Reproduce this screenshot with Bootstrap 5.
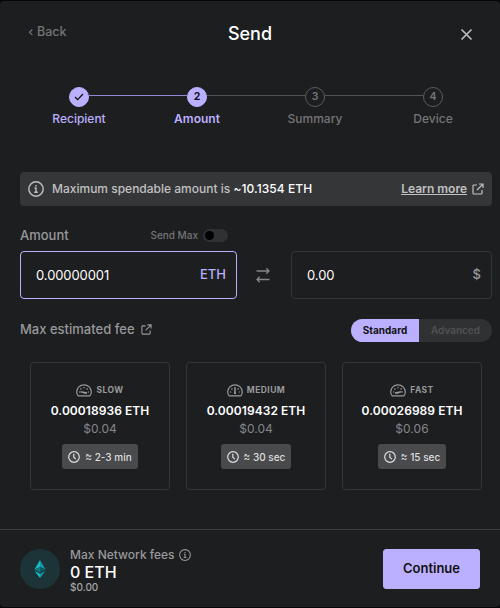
<!DOCTYPE html>
<html lang="en">
<head>
<meta charset="utf-8">
<meta name="viewport" content="width=device-width, initial-scale=1">
<title>Send</title>
<link href="https://cdn.jsdelivr.net/npm/bootstrap@5.3.0/dist/css/bootstrap.min.css" rel="stylesheet">
<style>
:root{--accent:#bbb0ff;--muted:#747577;--soft:#98999a;--line:#343537}
html{background:#060607}
body{background:#060607;font-family:Inter,sans-serif;font-size:13px;line-height:16px;color:#fff;font-weight:500;padding:1px 0;overflow:hidden}
svg{display:block;fill:none;stroke:currentColor;flex:none}
.dialog-box{background:#1d1e20;height:606px;border-radius:4px}
.top-bar{height:66px;padding:22px 27px 0 28px}
.back-link{color:var(--muted);width:100px;font-size:12.5px;padding-top:1px}
.heading{font-size:18px;line-height:22px;margin-right:1px}
.close-btn{color:#bbb;width:100px;padding-top:5px}
.stepper{padding:20px 8px 0 20px}
.step-item{width:118px;flex:none}
.step-item .track{height:20px}
.bar{height:1px;margin-bottom:3px;background:#515254}
.bar.done{background:#9288cf}
.bar.none{background:none}
.dot{width:20px;height:20px;border-radius:50%;border:1px solid #5a5b5d;color:var(--muted);font-size:10.5px;font-weight:600;flex:none}
.dot.on{background:var(--accent);border-color:var(--accent);color:#111;font-weight:700}
.step-name{font-size:12px;color:var(--muted);margin-top:4px}
.on-text{color:var(--accent)}
.content{padding:45px 8px 0 20px}
.notice{height:34px;background:#353638;border-radius:4px;padding:0 8px;font-size:12px;color:#c1c1c2}
.max-value{letter-spacing:.06px}
.more-link{margin-right:5px}
.pay{width:217px}
.pay-label{height:45px;padding:13px 9px 0 0;color:var(--soft)}
.send-max{font-size:10px;color:var(--muted);margin-right:5px}
.switch-box{width:25px;height:13px;background:#303133;border-radius:7px;padding:2px}
.switch-box i{display:block;width:9px;height:9px;background:#000;border-radius:50%}
.field{height:48px;border:1px solid var(--line);border-radius:4px;padding:0 10px 0 15px;font-weight:400}
.field.active{border-color:var(--accent)}
.field input{all:unset;min-width:0;width:120px;font-size:13px;color:#fff;letter-spacing:-.08px}
.unit{font-weight:500;padding-bottom:2px}
.dollar{color:#999a9c}
.swap{width:54px;padding:0 2px 16px 0;color:#858688}
.fiat{width:201px}
.fee-head{margin-top:20px;color:var(--soft)}
.fee-title{padding-bottom:3px}
.fee-title svg{margin:1px 0 0 6px}
.segment{height:23px;border-radius:12px;overflow:hidden;font-size:10px;font-weight:600;background:#303133}
.segment span{padding-bottom:1px}
.seg-a{background:var(--accent);color:#111;width:68px;font-weight:700}
.seg-b{width:73px;color:#505153}
.fee-row{padding:20px 10px 0;gap:16px}
.fee{width:140px;height:128px;border:1px solid var(--line);border-radius:4px;padding-top:19px}
.fee-kind{font-size:8.5px;line-height:14px;font-weight:700;letter-spacing:.45px;color:var(--soft);gap:4px}
.fee-kind svg{margin-top:2px}
.eth{font-size:12px;font-weight:600;letter-spacing:.06px;margin-top:6px}
.usd{font-size:12px;color:#858688;letter-spacing:.06px;margin:2px 0 7px;font-weight:400}
.eta{height:25px;background:#484a4c;border-radius:3px;padding:0 6px;font-size:10px;color:#dededf;gap:5px}
.foot{height:78px;border-top:1px solid #3c3d3f;padding:0 20px}
.coin{width:40px;height:40px;border-radius:50%;background:#1c3438}
.coin svg{stroke:none}
.totals{margin-left:10px;padding-top:1px}
.net-label{font-size:12px;color:var(--soft);gap:4px}
.net-value{font-size:16px;line-height:19px}
.net-usd{font-size:10px;line-height:10px;color:#a5a6a7}
.go{--bs-btn-bg:#bbb0ff;--bs-btn-color:#111;--bs-btn-hover-bg:#cbc3ff;--bs-btn-border-color:#bbb0ff;width:97px;height:40px;border-radius:3px;font-size:13px;font-weight:600;padding:0}
</style>
</head>
<body>
<svg width="0" height="0" class="position-absolute">
<symbol id="ext" viewBox="0 0 12 12"><path d="M5 2H1.8Q1 2 1 2.8v7.4q0 .8.8.8h7.4q.8 0 .8-.8V7M7 1h4v4M11 1 5 7"/></symbol>
<symbol id="info" viewBox="0 0 16 16"><circle cx="8" cy="8" r="7.2"/><path d="M6.5 7H8v4.3M6.300 11.300h3.500M8 4v1.400"/></symbol>
<symbol id="clock" viewBox="0 0 12 12"><circle cx="6" cy="6" r="5.300"/><path d="M5.800 2.700v3.500l2 2"/></symbol>
<symbol id="dash" viewBox="0 0 16 13"><path d="M2.2 11.9Q.7 10.5.7 8a7.3 7.2 0 0 1 14.6 0q0 2.5-1.5 3.9z"/><path d="M3 8h1.2M4.4 4.5l1 1M8 3v1.3M11.6 4.5l-1 1M11.8 8H13"/></symbol>
</svg>
<main class="dialog-box d-flex flex-column">
<header class="top-bar d-flex justify-content-between align-items-start">
<div class="back-link d-flex align-items-center"><svg width="5" height="8" viewBox="0 0 5 8" class="me-1" stroke-width="1.2"><path d="M4.3 1.5 1.5 4.2l2.8 2.7"/></svg><span>Back</span></div>
<div class="heading">Send</div>
<div class="close-btn d-flex justify-content-end"><svg width="13" height="13" viewBox="0 0 13 13" stroke-width="1.7"><path d="m1.5 1.5 10 10m0-10-10 10"/></svg></div>
</header>
<div class="stepper d-flex">
<div class="step-item text-center"><div class="track d-flex align-items-center"><div class="bar none flex-fill"></div><div class="dot on d-flex align-items-center justify-content-center"><svg width="10" height="8" viewBox="0 0 10 8" stroke-width="1.3"><path d="m1 4 2.6 2.6L9 1"/></svg></div><div class="bar done flex-fill"></div></div><div class="step-name on-text">Recipient</div></div>
<div class="step-item text-center"><div class="track d-flex align-items-center"><div class="bar done flex-fill"></div><div class="dot on d-flex align-items-center justify-content-center">2</div><div class="bar flex-fill"></div></div><div class="step-name on-text fw-semibold">Amount</div></div>
<div class="step-item text-center"><div class="track d-flex align-items-center"><div class="bar flex-fill"></div><div class="dot d-flex align-items-center justify-content-center">3</div><div class="bar flex-fill"></div></div><div class="step-name">Summary</div></div>
<div class="step-item text-center"><div class="track d-flex align-items-center"><div class="bar flex-fill"></div><div class="dot d-flex align-items-center justify-content-center">4</div><div class="bar none flex-fill"></div></div><div class="step-name">Device</div></div>
</div>
<section class="content flex-grow-1">
<div class="notice d-flex align-items-center"><svg width="16" height="16" stroke-width="1.4" class="me-2"><use href="#info"/></svg><span>Maximum spendable amount is <span class="max-value text-white">~10.1354 ETH</span></span><span class="more-link ms-auto text-decoration-underline fw-semibold">Learn more</span><svg width="12" height="12" stroke-width="1.2"><use href="#ext"/></svg></div>
<div class="d-flex">
<div class="pay"><div class="pay-label d-flex align-items-center"><span>Amount</span><span class="send-max ms-auto">Send Max</span><span class="switch-box"><i></i></span></div>
<div class="field active d-flex align-items-center justify-content-between"><input value="0.00000001" aria-label="Amount in ETH"><span class="unit on-text">ETH</span></div></div>
<div class="swap d-flex align-items-end justify-content-center"><svg width="16" height="16" viewBox="0 0 16 16" stroke-width="1.3"><path d="M1.5 4H14M11.3 1.3 14 4l-2.7 2.7M14.5 12.5H2M4.7 9.8 2 12.5l2.7 2.7"/></svg></div>
<div class="fiat d-flex align-items-end"><div class="field w-100 d-flex align-items-center justify-content-between"><input value="0.00" aria-label="Amount in dollars"><span class="unit dollar">$</span></div></div>
</div>
<div class="fee-head d-flex align-items-center"><div class="fee-title d-flex align-items-center"><span>Max estimated fee</span><svg width="11" height="11" stroke-width="1.2"><use href="#ext"/></svg></div>
<div class="segment d-flex ms-auto"><span class="seg-a d-flex align-items-center justify-content-center">Standard</span><span class="seg-b d-flex align-items-center justify-content-center">Advanced</span></div></div>
<div class="fee-row d-flex">
<div class="fee d-flex flex-column align-items-center flex-shrink-0"><div class="fee-kind d-flex align-items-center"><svg width="16" height="13" stroke-width="1.2"><use href="#dash"/><path d="m4.5 7.8 6.5 1.2H7.5" stroke-width="1.5"/></svg><span>SLOW</span></div><div class="eth">0.00018936 ETH</div><div class="usd">$0.04</div><div class="eta d-flex align-items-center"><svg width="12" height="12" stroke-width="1.2"><use href="#clock"/></svg><span>≈ 2-3 min</span></div></div>
<div class="fee d-flex flex-column align-items-center flex-shrink-0"><div class="fee-kind d-flex align-items-center"><svg width="16" height="13" stroke-width="1.2"><use href="#dash"/><path d="M8 4v5.5M7 9.3h2" stroke-width="1.5"/></svg><span>MEDIUM</span></div><div class="eth">0.00019432 ETH</div><div class="usd">$0.04</div><div class="eta d-flex align-items-center"><svg width="12" height="12" stroke-width="1.2"><use href="#clock"/></svg><span>≈ 30 sec</span></div></div>
<div class="fee d-flex flex-column align-items-center flex-shrink-0"><div class="fee-kind d-flex align-items-center"><svg width="16" height="13" stroke-width="1.2"><use href="#dash"/><path d="M11.5 7.8 5 9h3.5" stroke-width="1.5"/></svg><span>FAST</span></div><div class="eth">0.00026989 ETH</div><div class="usd">$0.06</div><div class="eta d-flex align-items-center"><svg width="12" height="12" stroke-width="1.2"><use href="#clock"/></svg><span>≈ 15 sec</span></div></div>
</div>
</section>
<footer class="foot d-flex align-items-center"><div class="coin d-flex align-items-center justify-content-center"><svg width="12" height="18" viewBox="0 0 12 18"><path fill="#18bac8" d="M6 0v7L.4 9.5z"/><path fill="#1496a3" d="m6 0 5.6 9.5L6 7z"/><path fill="#117782" d="M.4 9.5 6 7v5.5z"/><path fill="#0d5963" d="M11.6 9.5 6 7v5.5z"/><path fill="#18bac8" d="M.4 10.7 6 13.8V18z"/><path fill="#1496a3" d="M11.6 10.7 6 13.8V18z"/></svg></div>
<div class="totals flex-grow-1"><div class="net-label d-flex align-items-center"><span>Max Network fees</span><svg width="12" height="12" stroke-width="1.4"><use href="#info"/></svg></div><div class="net-value">0 ETH</div><div class="net-usd">$0.00</div></div><button class="btn go">Continue</button></footer>
</main>
<script src="https://cdn.jsdelivr.net/npm/bootstrap@5.3.0/dist/js/bootstrap.bundle.min.js"></script>
</body>
</html>
